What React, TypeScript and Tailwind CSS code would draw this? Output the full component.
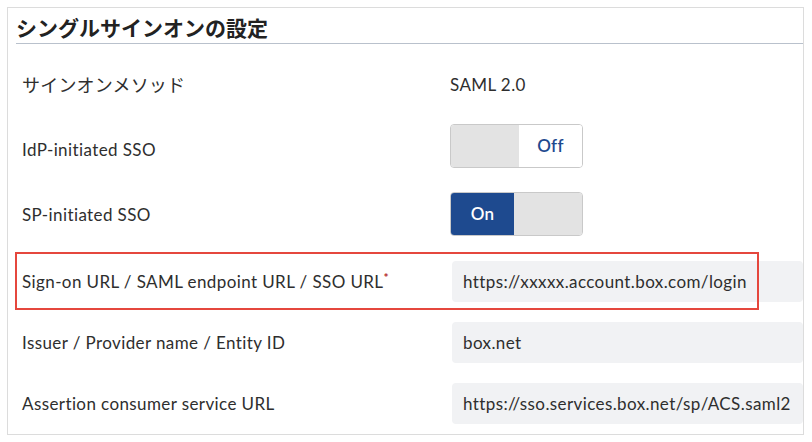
import React from "react"

const font = { fontFamily: '"Lato", "Noto Sans CJK JP", sans-serif' }
const jp = { fontFamily: '"Noto Sans CJK JP", sans-serif' }

function Toggle({ on }: { on: boolean }) {
  return (
    <div className="flex h-[44px] w-[133px] overflow-hidden rounded-[4px] border border-[#c9c9c9] tracking-[0.3px]">
      {on ? (
        <>
          <div className="flex w-[63px] items-center justify-center bg-[#1e4a8f] text-[17px] font-semibold text-white">On</div>
          <div className="flex-1 bg-[#e3e3e3]" />
        </>
      ) : (
        <>
          <div className="w-[68px] bg-[#e3e3e3]" />
          <div className="flex flex-1 items-center justify-center bg-white text-[17px] font-semibold text-[#1e4a8f]">Off</div>
        </>
      )}
    </div>
  )
}

function Field({ value }: { value: string }) {
  return (
    <div className="ml-[2px] flex h-[41px] flex-1 items-center rounded-[4px] bg-[#f1f2f4] pl-[11px] text-[17px] text-[#2e2e2e]">
      {value}
    </div>
  )
}

export default function App() {
  return (
    <div className="min-h-[442px] bg-white pl-[7px] pt-[7px]" style={font}>
      <div className="h-[428px] w-[797px] border border-[#dcdcdc]">
        <div className="ml-[8px] h-[36px] border-b border-[#b9c1cc] pt-[5px]">
          <h1 className="text-[21px] font-bold leading-[28px] text-[#222]" style={jp}>
            シングルサインオンの設定
          </h1>
        </div>

        <div className="pt-[8px] text-[17px] tracking-[0.4px] text-[#2e2e2e]">
          <div className="flex h-[65px] items-center">
            <div className="w-[442px] pl-[14px] text-[18px] tracking-[0.2px]" style={jp}>サインオンメソッド</div>
            <div>SAML 2.0</div>
          </div>

          <div className="flex h-[65px] items-center">
            <div className="w-[442px] pl-[14px]">IdP-initiated SSO</div>
            <div className="mb-[7px]">
              <Toggle on={false} />
            </div>
          </div>

          <div className="flex h-[65px] items-center">
            <div className="w-[442px] pl-[14px]">SP-initiated SSO</div>
            <div className="mb-[2px]">
              <Toggle on={true} />
            </div>
          </div>

          <div className="relative mt-[4px] flex h-[61px] items-center">
            <div className="w-[442px] pl-[14px]">
              Sign-on URL / SAML endpoint URL / SSO URL
              <sup className="text-[12px] font-bold text-[#b3262c]">*</sup>
            </div>
            <Field value="https://xxxxx.account.box.com/login" />
            <div className="absolute left-[7px] top-[1px] h-[58px] w-[744px] border-2 border-[#e5473d]" />
          </div>

          <div className="flex h-[61px] items-center">
            <div className="w-[442px] pl-[14px]">Issuer / Provider name / Entity ID</div>
            <Field value="box.net" />
          </div>

          <div className="flex h-[61px] items-center">
            <div className="w-[442px] pl-[14px]">Assertion consumer service URL</div>
            <Field value="https://sso.services.box.net/sp/ACS.saml2" />
          </div>
        </div>
      </div>
    </div>
  )
}
